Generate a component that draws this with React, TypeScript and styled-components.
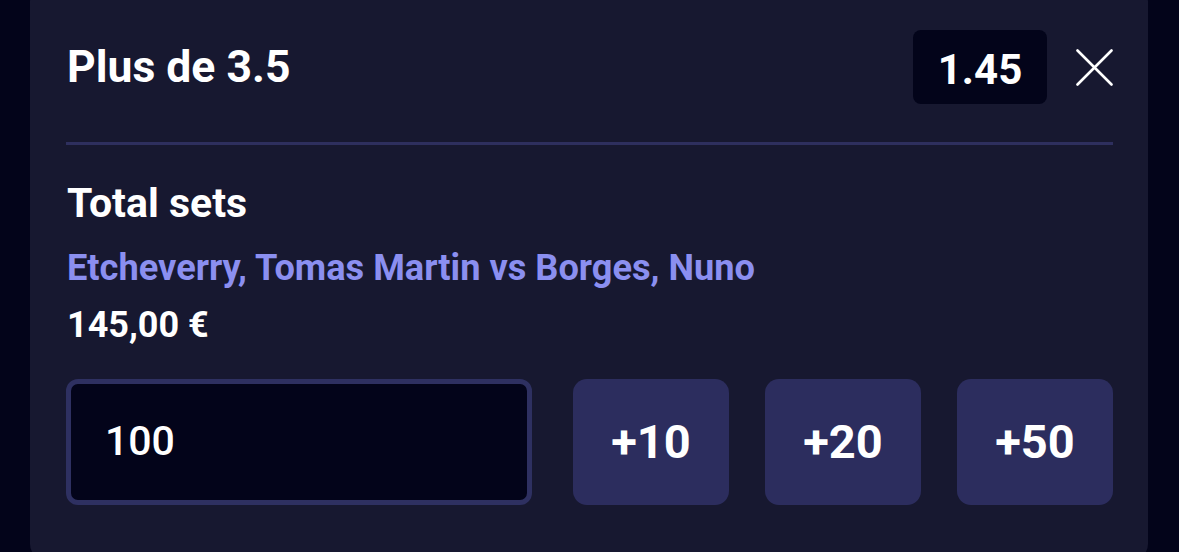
import styled, { createGlobalStyle } from 'styled-components';

const GlobalStyle = createGlobalStyle`
  html, body {
    margin: 0;
    padding: 0;
    background: #03041a;
  }
  body {
    font-family: Roboto, "Liberation Sans", sans-serif;
  }
`;

const Page = styled.main`
  width: 1179px;
  height: 552px;
  padding: 0 31px 0 30px;
  box-sizing: border-box;
  overflow: hidden;
`;

const Card = styled.section`
  background: #171830;
  border-radius: 16px;
  margin-top: -14px;
  height: 574px;
  padding: 44px 35px 0 36px;
  box-sizing: border-box;
  display: flex;
  flex-direction: column;
  color: #ffffff;
`;

const Header = styled.header`
  display: flex;
  align-items: center;
  height: 74px;
  padding-bottom: 38px;
  border-bottom: 3px solid #2e2f5e;
`;

const Title = styled.h1`
  flex: 1;
  margin: 0 0 0 1px;
  font-size: 44.5px;
  font-weight: 700;
`;

const Odds = styled.div`
  width: 134px;
  height: 74px;
  box-sizing: border-box;
  padding-top: 4px;
  border-radius: 8px;
  background: #03041a;
  display: flex;
  align-items: center;
  justify-content: center;
  font-size: 42px;
  font-weight: 700;
`;

const CloseButton = styled.button`
  margin-left: 29px;
  width: 37px;
  height: 37px;
  padding: 0;
  border: none;
  background: none;
  display: flex;
  align-items: center;
  justify-content: center;
  color: #ffffff;
`;

const Market = styled.h2`
  margin: 34px 0 0 1px;
  font-size: 41px;
  font-weight: 700;
  line-height: 48px;
`;

const Match = styled.p`
  margin: 19px 0 0 1px;
  font-size: 36.2px;
  font-weight: 700;
  line-height: 44px;
  color: #8b8ff0;
`;

const Payout = styled.p`
  margin: 14px 0 0 1px;
  font-size: 36px;
  font-weight: 700;
  line-height: 42px;
`;

const StakeRow = styled.div`
  display: grid;
  grid-template-columns: 1fr repeat(3, 156px);
  column-gap: 36px;
  margin-top: 33px;
  height: 126px;
`;

const StakeInput = styled.input`
  margin-right: 5px;
  min-width: 0;
  box-sizing: border-box;
  border: 5px solid #2e3061;
  border-radius: 12px;
  background: #03041a;
  color: #ffffff;
  font-family: inherit;
  font-size: 41px;
  font-weight: 500;
  padding: 0 0 2px 34px;
  outline: none;
`;

const QuickAdd = styled.button`
  border: none;
  border-radius: 14px;
  background: #2c2d5e;
  color: #ffffff;
  font-family: inherit;
  font-size: 47px;
  font-weight: 700;
  padding: 0 0 2px;
`;

function App() {
  return (
    <Page>
      <GlobalStyle />
      <Card>
        <Header>
          <Title>Plus de 3.5</Title>
          <Odds>1.45</Odds>
          <CloseButton aria-label="Fermer">
            <svg width="37" height="37" viewBox="0 0 37 37">
              <path d="M1.5 1.5 L35.5 35.5 M35.5 1.5 L1.5 35.5" stroke="currentColor" strokeWidth="2.6" strokeLinecap="round" />
            </svg>
          </CloseButton>
        </Header>
        <Market>Total sets</Market>
        <Match>Etcheverry, Tomas Martin vs Borges, Nuno</Match>
        <Payout>145,00 €</Payout>
        <StakeRow>
          <StakeInput defaultValue="100" />
          {[10, 20, 50].map((v) => (
            <QuickAdd key={v}>+{v}</QuickAdd>
          ))}
        </StakeRow>
      </Card>
    </Page>
  );
}

export default App;
